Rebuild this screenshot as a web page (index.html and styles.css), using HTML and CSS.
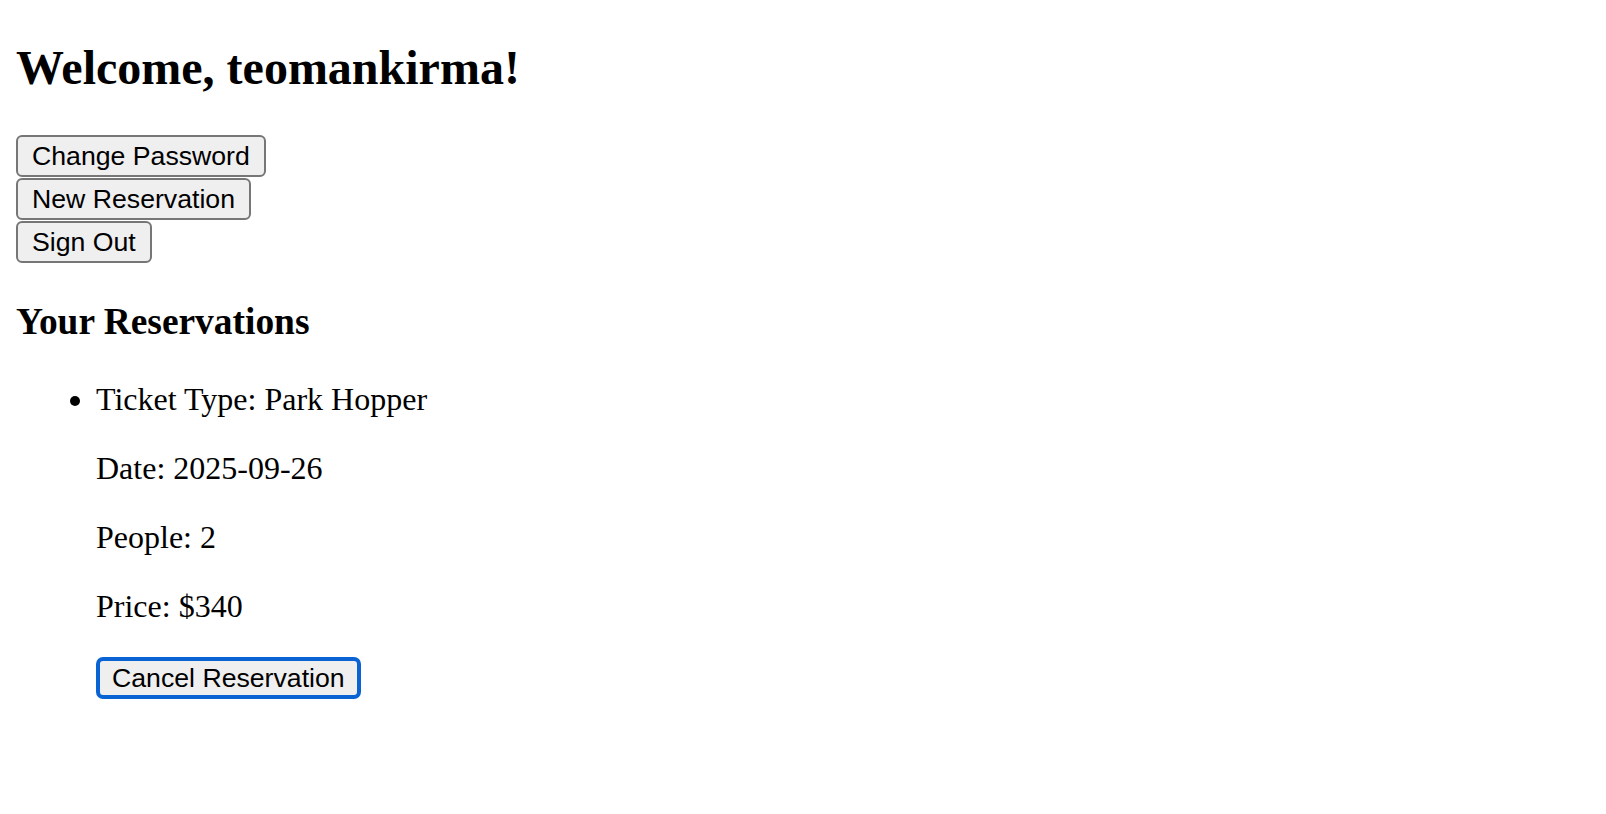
FILE: index.html
```html
<!DOCTYPE html>
<html lang="en">
<head>
<meta charset="utf-8">
<title>Dashboard</title>
<link rel="stylesheet" href="styles.css">
</head>
<body>
<section class="dashboard">
  <h1 class="welcome">Welcome, teomankirma!</h1>
  <div class="actions">
    <button class="btn" type="button">Change Password</button>
    <button class="btn" type="button">New Reservation</button>
    <button class="btn" type="button">Sign Out</button>
  </div>
  <h3 class="section-title">Your Reservations</h3>
  <ul class="reservations">
    <li class="reservation">
      <p class="field">Ticket Type: Park Hopper</p>
      <p class="field">Date: 2025-09-26</p>
      <p class="field">People: 2</p>
      <p class="field">Price: $340</p>
      <div class="reservation-actions">
        <button class="btn btn-focused" type="button">Cancel Reservation</button>
      </div>
    </li>
  </ul>
</section>
</body>
</html>
```
FILE: styles.css
```css
html {
  background: #ffffff;
}

body {
  margin: 0 16px 16px;
  font-family: "Liberation Serif", "Times New Roman", serif;
  font-size: 32px;
  color: #000000;
}

.dashboard {
  display: block;
}

.welcome {
  font-size: 48px;
  font-weight: bold;
  margin: 39.84px 0;
  line-height: normal;
}

.actions {
  display: flex;
  flex-direction: column;
  align-items: flex-start;
  gap: 1px;
}

.btn {
  font-family: "Liberation Sans", Arial, Helvetica, sans-serif;
  font-size: 26.67px;
  line-height: 30px;
  color: #000000;
  background: #efefef;
  border: 2px solid #767676;
  border-radius: 6px;
  padding: 4px 14px;
  margin: 0;
  cursor: default;
}

.btn-focused {
  border: 4px solid #0a63d3;
  border-radius: 7px;
  padding: 2px 12px;
}

.section-title {
  font-size: 37.44px;
  font-weight: bold;
  margin: 37.44px 0;
  line-height: normal;
}

.reservations {
  margin: 32px 0;
  padding-left: 80px;
  list-style: disc;
}

.field {
  margin: 32px 0;
}

.reservation-actions {
  display: flex;
}
```
